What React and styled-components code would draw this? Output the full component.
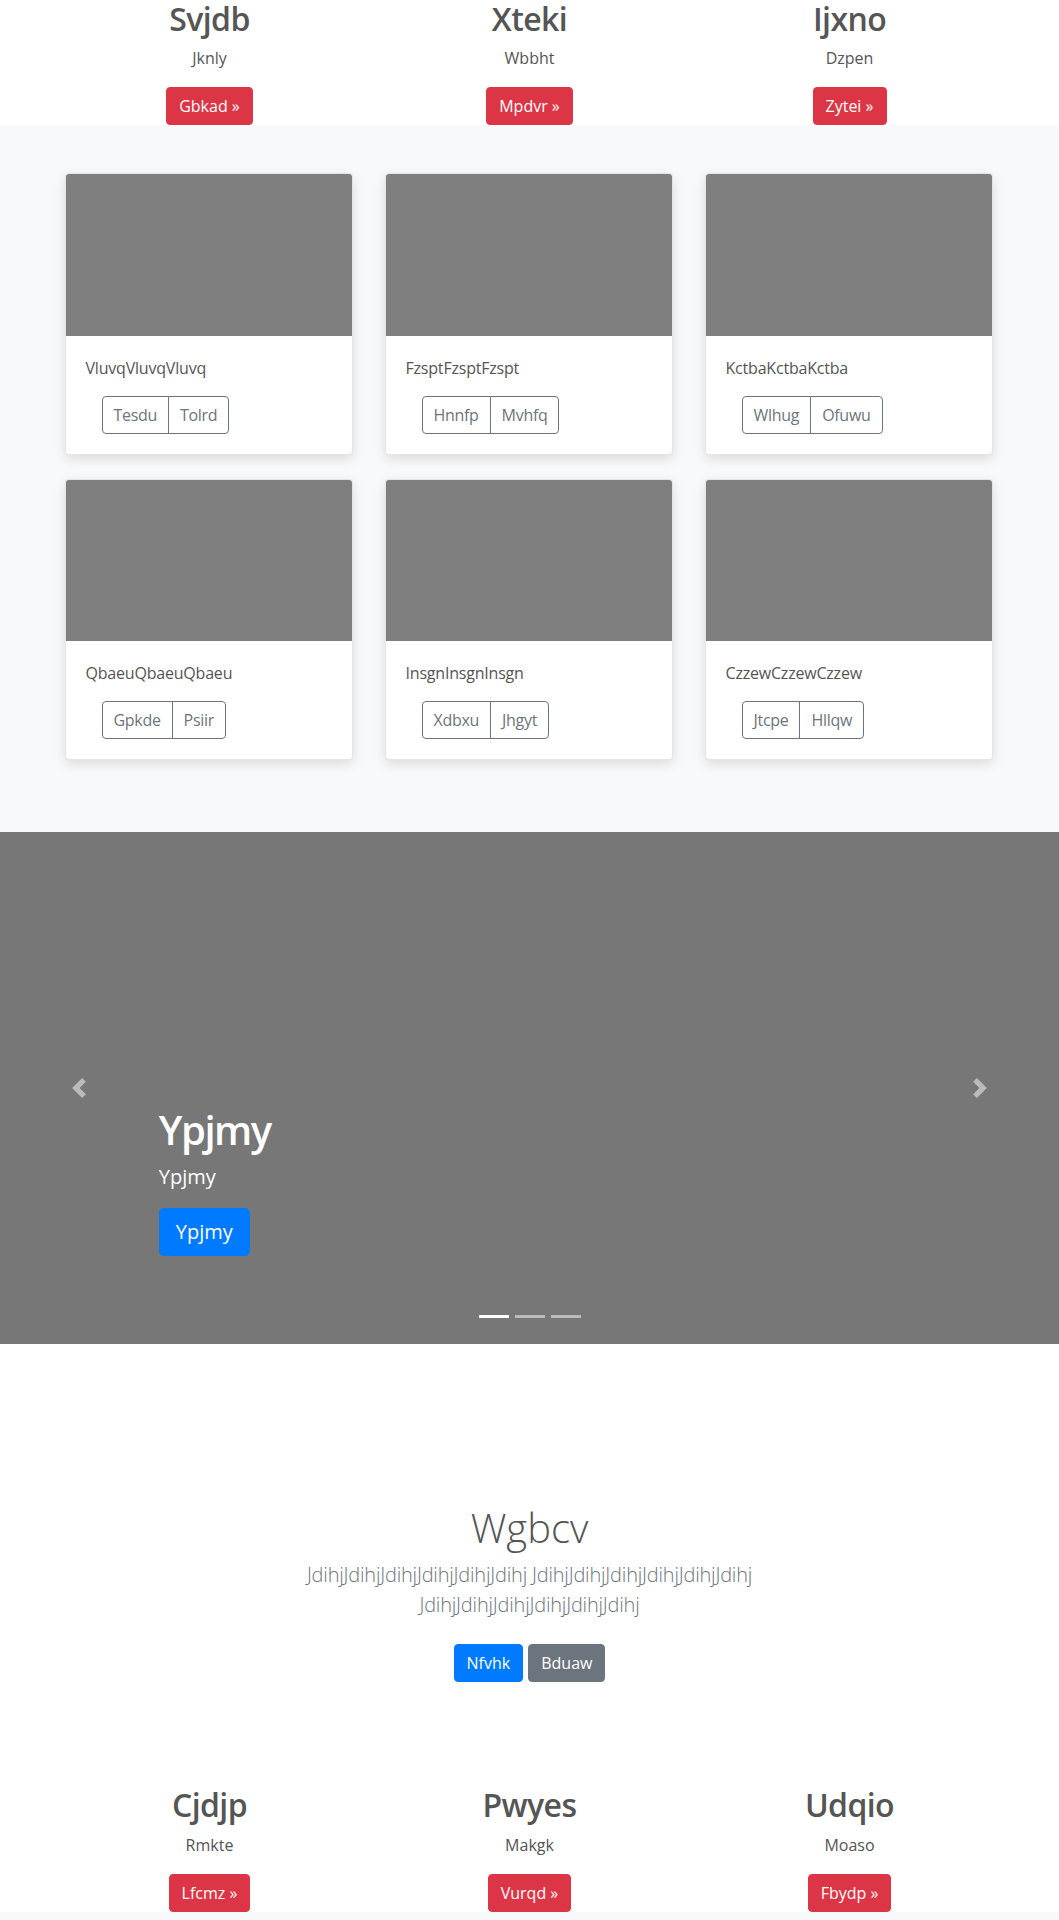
import React from "react";
import styled, { createGlobalStyle } from "styled-components";

const GlobalStyle = createGlobalStyle`
  *, *::before, *::after { box-sizing: border-box; }
  body {
    margin: 0;
    font-family: "Open Sans", "Noto Sans", "Liberation Sans", sans-serif;
    font-size: 16px;
    line-height: 1.5;
    color: #555;
    background: #fff;
  }
`;

const colors = {
  danger: "#dc3545",
  primary: "#007bff",
  secondary: "#6c757d",
};

const Page = styled.div`
  display: flex;
  flex-direction: column;
`;

const Container = styled.div`
  width: 100%;
  max-width: ${(p) => p.$max || 960}px;
  margin: 0 auto;
  padding: 0 15px;
`;

const FeatureRow = styled.div`
  display: grid;
  grid-template-columns: repeat(3, 1fr);
  margin: 0 -15px;
`;

const FeatureCol = styled.div`
  padding: 0 15px;
  display: flex;
  flex-direction: column;
  align-items: center;
  text-align: center;
`;

const FeatureTitle = styled.h2`
  font-size: 32px;
  font-weight: 600;
  line-height: 1.2;
  letter-spacing: -0.6px;
  margin: 0 0 8px;
  color: #555;
`;

const FeatureText = styled.p`
  margin: 0 0 17px;
`;

const Button = styled.a`
  display: inline-block;
  font-size: ${(p) => (p.$lg ? 20 : 16)}px;
  line-height: 1.5;
  padding: ${(p) => (p.$lg ? "8px 16px" : "6px 12px")};
  border: 1px solid ${(p) => colors[p.$variant]};
  border-radius: ${(p) => (p.$lg ? 5 : 4)}px;
  background: ${(p) => colors[p.$variant]};
  color: #fff;
  text-decoration: none;
  white-space: nowrap;
  cursor: pointer;
`;

const Album = styled.section`
  background: #f8f9fa;
  padding: 48px 0 72px;
`;

const CardGrid = styled.div`
  display: grid;
  grid-template-columns: repeat(3, 288px);
  column-gap: 32px;
  row-gap: 24px;
`;

const Card = styled.div`
  display: flex;
  flex-direction: column;
  background: #fff;
  border: 1px solid rgba(0, 0, 0, 0.1);
  border-radius: 4px;
  box-shadow: 0 4px 12px rgba(0, 0, 0, 0.12);
  overflow: hidden;
`;

const CardImage = styled.div`
  height: 161.5px;
  background: #7f7f7f;
`;

const CardBody = styled.div`
  padding: 20px;
`;

const CardText = styled.p`
  margin: 0 0 16px;
  letter-spacing: -0.2px;
`;

const BtnGroup = styled.div`
  display: inline-flex;
  margin-left: 16px;
`;

const OutlineButton = styled.button`
  font-family: inherit;
  font-size: 16px;
  line-height: 1.5;
  letter-spacing: -0.3px;
  padding: 6px 11px;
  background: transparent;
  color: #6c757d;
  border: 1px solid #6c757d;
  border-radius: 0;
  cursor: pointer;
  &:first-child {
    border-radius: 4px 0 0 4px;
  }
  &:last-child {
    border-radius: 0 4px 4px 0;
    margin-left: -1px;
  }
`;

const Carousel = styled.div`
  position: relative;
  height: 512px;
  background: #777;
  margin-bottom: 64px;
  overflow: hidden;
`;

const Caption = styled.div`
  position: absolute;
  left: 15%;
  right: 15%;
  bottom: 48px;
  padding: 20px 0;
  color: #fff;
  text-align: left;
`;

const CaptionTitle = styled.h1`
  font-size: 40px;
  font-weight: 600;
  line-height: 1.2;
  letter-spacing: -1.5px;
  margin: 0 0 8px;
`;

const CaptionText = styled.p`
  font-size: 20px;
  line-height: 1.5;
  margin: 0 0 16px;
`;

const CaptionAction = styled.div`
  display: flex;
  margin-bottom: 20px;
`;

const Control = styled.a`
  position: absolute;
  top: 0;
  bottom: 0;
  ${(p) => (p.$side === "prev" ? "left: 0;" : "right: 0;")}
  width: 15%;
  display: flex;
  align-items: center;
  justify-content: center;
  opacity: 0.5;
  z-index: 5;
`;

const Indicators = styled.ol`
  position: absolute;
  left: 0;
  right: 0;
  bottom: 26px;
  display: flex;
  justify-content: center;
  gap: 6px;
  margin: 0;
  padding: 0;
  list-style: none;
  z-index: 5;
`;

const Indicator = styled.li`
  width: 30px;
  height: 3px;
  background: #fff;
  opacity: ${(p) => (p.$active ? 1 : 0.5)};
`;

const Jumbotron = styled.section`
  padding: 96px 0;
  text-align: center;
`;

const JumboTitle = styled.h1`
  font-size: 40px;
  font-weight: 300;
  line-height: 1.2;
  margin: 0 0 8px;
  color: #555;
`;

const Lead = styled.p`
  font-size: 20px;
  font-weight: 300;
  line-height: 1.5;
  letter-spacing: -0.2px;
  margin: 0 0 16px;
  color: #6c757d;
`;

const JumboActions = styled.div`
  display: flex;
  justify-content: center;
  gap: 5px;
  padding: 8px 0;
`;

const FooterBand = styled.section`
  background: #f8f9fa;
  height: 80px;
`;

const topFeatures = [
  { t: "Svjdb", s: "Jknly", b: "Gbkad" },
  { t: "Xteki", s: "Wbbht", b: "Mpdvr" },
  { t: "Ijxno", s: "Dzpen", b: "Zytei" },
];

const bottomFeatures = [
  { t: "Cjdjp", s: "Rmkte", b: "Lfcmz" },
  { t: "Pwyes", s: "Makgk", b: "Vurqd" },
  { t: "Udqio", s: "Moaso", b: "Fbydp" },
];

const cards = [
  { text: "VluvqVluvqVluvq", a: "Tesdu", b: "Tolrd" },
  { text: "FzsptFzsptFzspt", a: "Hnnfp", b: "Mvhfq" },
  { text: "KctbaKctbaKctba", a: "Wlhug", b: "Ofuwu" },
  { text: "QbaeuQbaeuQbaeu", a: "Gpkde", b: "Psiir" },
  { text: "InsgnInsgnInsgn", a: "Xdbxu", b: "Jhgyt" },
  { text: "CzzewCzzewCzzew", a: "Jtcpe", b: "Hllqw" },
];

function Features({ items }) {
  return (
    <Container>
      <FeatureRow>
        {items.map((f) => (
          <FeatureCol key={f.t}>
            <FeatureTitle>{f.t}</FeatureTitle>
            <FeatureText>{f.s}</FeatureText>
            <Button $variant="danger">{f.b} »</Button>
          </FeatureCol>
        ))}
      </FeatureRow>
    </Container>
  );
}

const PrevIcon = () => (
  <svg width="20" height="20" viewBox="0 0 8 8" fill="#fff">
    <path d="M5.25 0l-4 4 4 4 1.5-1.5L4.25 4l2.5-2.5L5.25 0z" />
  </svg>
);

const NextIcon = () => (
  <svg width="20" height="20" viewBox="0 0 8 8" fill="#fff">
    <path d="M2.75 0l-1.5 1.5L3.75 4l-2.5 2.5L2.75 8l4-4-4-4z" />
  </svg>
);

const jdihj = "JdihjJdihjJdihjJdihjJdihjJdihj";

export default function App() {
  return (
    <Page>
      <GlobalStyle />
      <Features items={topFeatures} />

      <Album>
        <Container>
          <CardGrid>
            {cards.map((c) => (
              <Card key={c.text}>
                <CardImage />
                <CardBody>
                  <CardText>{c.text}</CardText>
                  <BtnGroup>
                    <OutlineButton>{c.a}</OutlineButton>
                    <OutlineButton>{c.b}</OutlineButton>
                  </BtnGroup>
                </CardBody>
              </Card>
            ))}
          </CardGrid>
        </Container>
      </Album>

      <Carousel>
        <Caption>
          <CaptionTitle>Ypjmy</CaptionTitle>
          <CaptionText>Ypjmy</CaptionText>
          <CaptionAction>
            <Button $variant="primary" $lg>
              Ypjmy
            </Button>
          </CaptionAction>
        </Caption>
        <Control $side="prev">
          <PrevIcon />
        </Control>
        <Control $side="next">
          <NextIcon />
        </Control>
        <Indicators>
          <Indicator $active />
          <Indicator />
          <Indicator />
        </Indicators>
      </Carousel>

      <Jumbotron>
        <Container $max={640}>
          <JumboTitle>Wgbcv</JumboTitle>
          <Lead>
            {jdihj} {jdihj} {jdihj}
          </Lead>
          <JumboActions>
            <Button $variant="primary">Nfvhk</Button>
            <Button $variant="secondary">Bduaw</Button>
          </JumboActions>
        </Container>
      </Jumbotron>

      <Features items={bottomFeatures} />
      <FooterBand />
    </Page>
  );
}
